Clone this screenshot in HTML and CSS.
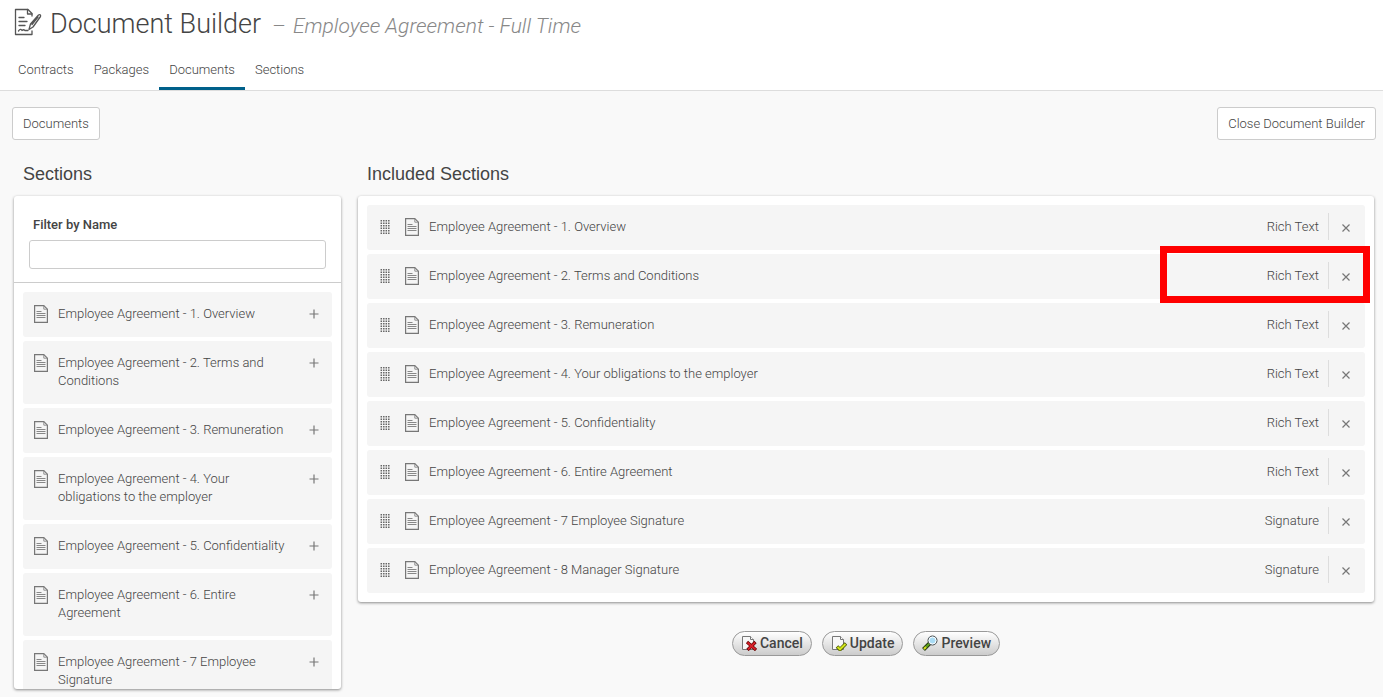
FILE: index.html
```html
<!DOCTYPE html>
<html lang="en">
<head>
<meta charset="utf-8">
<meta name="viewport" content="width=device-width, initial-scale=1">
<title>Document Builder</title>
<link rel="stylesheet" href="styles.css">
</head>
<body>
<svg class="defs" aria-hidden="true">
  <symbol id="doc" viewBox="0 0 14 18">
    <path d="M.6.6h9.2l3.6 3.6v13.2H.6z" fill="none" stroke="#777" stroke-width="1.2"/>
    <path d="M9.8.8v3.4h3.4" fill="none" stroke="#888" stroke-width=".9"/>
    <path d="M2.5 6.500h5M2.5 8.500h9M2.5 10.500h9M2.5 12.500h9" stroke="#888" stroke-width="1"/>
  </symbol>
  <symbol id="grip" viewBox="0 0 10 14">
    <path d="M1.3 0v14M3.8 0v14M6.3 0v14M8.8 0v14" stroke="#666" stroke-width="1.5" stroke-dasharray="1.5 1"/>
  </symbol>
  <symbol id="plus" viewBox="0 0 10 10"><path d="M5 .5v9M.5 5h9" stroke="#777" stroke-width="1.2"/></symbol>
  <symbol id="cross" viewBox="0 0 8 8"><path d="M.5.5l7 7M7.5.5l-7 7" stroke="#777" stroke-width="1.2"/></symbol>
  <symbol id="page" viewBox="0 0 16 16">
    <path d="M1.5 1.5h8l3 3v10h-11z" fill="#f7f7f7" stroke="#777"/>
    <path d="M9.5 1.5v3h3" fill="#fff" stroke="#777"/>
  </symbol>
</svg>

<header class="header">
  <div class="title">
    <svg class="title-icon" viewBox="0 0 28 28" fill="none" stroke="#555" stroke-width="1.3" stroke-linejoin="round" stroke-linecap="round" aria-hidden="true">
      <path d="M18 8V5.500L14 1.500H1.500v25H18v-3.500"/>
      <path d="M13.500 1.500V6H18"/>
      <path d="M5 9.500h5M5 13.500h8M5 17.500h6"/>
      <path d="M4.500 23c1.500-2 2.500-2 3.500-.5 1-1 2-1 3 0h3"/>
      <path d="M15 21.500l1.500-5.500 8-9c1.300-.8 2.500 0 2 1.500L19 19l-4 2.500zM18 16.500l6-7.500"/>
    </svg>
    <h1>Document Builder</h1>
    <span class="dash">–</span>
    <span class="subtitle">Employee Agreement - Full Time</span>
  </div>
  <nav class="tabs">
    <a href="#">Contracts</a>
    <a href="#">Packages</a>
    <a href="#" class="active" aria-current="page">Documents</a>
    <a href="#">Sections</a>
  </nav>
</header>

<main class="main">
  <div class="toolbar">
    <button class="btn">Documents</button>
    <button class="btn">Close Document Builder</button>
  </div>

  <div class="columns">
    <section class="side">
      <h2>Sections</h2>
      <div class="card side-card">
        <div class="filter">
          <label for="filter">Filter by Name</label>
          <input id="filter" type="text">
        </div>
        <ul class="list available">
          <li class="row"><svg class="doc"><use href="#doc"/></svg><span class="name">Employee Agreement - 1. Overview</span><button class="icon-btn" aria-label="Add"><svg class="plus"><use href="#plus"/></svg></button></li>
          <li class="row"><svg class="doc"><use href="#doc"/></svg><span class="name">Employee Agreement - 2. Terms and Conditions</span><button class="icon-btn" aria-label="Add"><svg class="plus"><use href="#plus"/></svg></button></li>
          <li class="row"><svg class="doc"><use href="#doc"/></svg><span class="name">Employee Agreement - 3. Remuneration</span><button class="icon-btn" aria-label="Add"><svg class="plus"><use href="#plus"/></svg></button></li>
          <li class="row"><svg class="doc"><use href="#doc"/></svg><span class="name">Employee Agreement - 4. Your obligations to the employer</span><button class="icon-btn" aria-label="Add"><svg class="plus"><use href="#plus"/></svg></button></li>
          <li class="row"><svg class="doc"><use href="#doc"/></svg><span class="name">Employee Agreement - 5. Confidentiality</span><button class="icon-btn" aria-label="Add"><svg class="plus"><use href="#plus"/></svg></button></li>
          <li class="row"><svg class="doc"><use href="#doc"/></svg><span class="name">Employee Agreement - 6. Entire Agreement</span><button class="icon-btn" aria-label="Add"><svg class="plus"><use href="#plus"/></svg></button></li>
          <li class="row"><svg class="doc"><use href="#doc"/></svg><span class="name">Employee Agreement - 7 Employee Signature</span><button class="icon-btn" aria-label="Add"><svg class="plus"><use href="#plus"/></svg></button></li>
        </ul>
      </div>
    </section>

    <section class="content">
      <h2>Included Sections</h2>
      <div class="card">
        <ul class="list included">
          <li class="row"><svg class="grip"><use href="#grip"/></svg><svg class="doc"><use href="#doc"/></svg><span class="name">Employee Agreement - 1. Overview</span><span class="type">Rich Text</span><button class="icon-btn" aria-label="Remove"><svg class="cross"><use href="#cross"/></svg></button></li>
          <li class="row"><svg class="grip"><use href="#grip"/></svg><svg class="doc"><use href="#doc"/></svg><span class="name">Employee Agreement - 2. Terms and Conditions</span><span class="type">Rich Text</span><button class="icon-btn" aria-label="Remove"><svg class="cross"><use href="#cross"/></svg></button><span class="highlight"></span></li>
          <li class="row"><svg class="grip"><use href="#grip"/></svg><svg class="doc"><use href="#doc"/></svg><span class="name">Employee Agreement - 3. Remuneration</span><span class="type">Rich Text</span><button class="icon-btn" aria-label="Remove"><svg class="cross"><use href="#cross"/></svg></button></li>
          <li class="row"><svg class="grip"><use href="#grip"/></svg><svg class="doc"><use href="#doc"/></svg><span class="name">Employee Agreement - 4. Your obligations to the employer</span><span class="type">Rich Text</span><button class="icon-btn" aria-label="Remove"><svg class="cross"><use href="#cross"/></svg></button></li>
          <li class="row"><svg class="grip"><use href="#grip"/></svg><svg class="doc"><use href="#doc"/></svg><span class="name">Employee Agreement - 5. Confidentiality</span><span class="type">Rich Text</span><button class="icon-btn" aria-label="Remove"><svg class="cross"><use href="#cross"/></svg></button></li>
          <li class="row"><svg class="grip"><use href="#grip"/></svg><svg class="doc"><use href="#doc"/></svg><span class="name">Employee Agreement - 6. Entire Agreement</span><span class="type">Rich Text</span><button class="icon-btn" aria-label="Remove"><svg class="cross"><use href="#cross"/></svg></button></li>
          <li class="row"><svg class="grip"><use href="#grip"/></svg><svg class="doc"><use href="#doc"/></svg><span class="name">Employee Agreement - 7 Employee Signature</span><span class="type">Signature</span><button class="icon-btn" aria-label="Remove"><svg class="cross"><use href="#cross"/></svg></button></li>
          <li class="row"><svg class="grip"><use href="#grip"/></svg><svg class="doc"><use href="#doc"/></svg><span class="name">Employee Agreement - 8 Manager Signature</span><span class="type">Signature</span><button class="icon-btn" aria-label="Remove"><svg class="cross"><use href="#cross"/></svg></button></li>
        </ul>
      </div>
      <div class="actions">
        <button class="pill">
          <svg viewBox="0 0 16 16" aria-hidden="true"><use href="#page"/><path d="M6 7l9 8M14.500 7L6.500 15" stroke="#600" stroke-width="3.200"/><path d="M6.500 7.500l8 7M14 7.500l-7 7" stroke="#d8202a" stroke-width="1.800"/></svg>
          Cancel
        </button>
        <button class="pill">
          <svg viewBox="0 0 16 16" aria-hidden="true"><use href="#page"/><path d="M6 11.500l3 3 6-6" fill="none" stroke="#4b5a00" stroke-width="3.600"/><path d="M6.500 12l2.500 2.300L14.500 9" fill="none" stroke="#d3e51c" stroke-width="2"/></svg>
          Update
        </button>
        <button class="pill">
          <svg viewBox="0 0 16 16" aria-hidden="true"><path d="M1.500 14.500l6-6" stroke="#233a10" stroke-width="4"/><path d="M2 14l5.500-5.500" stroke="#5fa51e" stroke-width="2"/><path d="M2 14l2-2" stroke="#d8d820" stroke-width="2"/><circle cx="10.500" cy="5.500" r="4.500" fill="#a9dcf5" stroke="#444"/><circle cx="10.500" cy="5.500" r="3.500" fill="none" stroke="#fff"/></svg>
          Preview
        </button>
      </div>
    </section>
  </div>
</main>
</body>
</html>
```

FILE: styles.css
```css
* { box-sizing: border-box; }

body {
  margin: 0;
  height: 100vh;
  display: flex;
  flex-direction: column;
  background: #f9f9f9;
  color: #444;
  font: 300 13px/18px Roboto, sans-serif;
}

button, input { font: inherit; color: inherit; }
button { cursor: pointer; }
h1, h2, ul { margin: 0; padding: 0; font-weight: inherit; }
svg { flex: none; display: block; }
.defs { position: absolute; width: 0; height: 0; }

.header {
  background: #fff;
  border-bottom: 1px solid #ddd;
}
.title {
  display: flex;
  align-items: baseline;
  padding: 8px 14px 0;
  height: 50px;
}
.title-icon { width: 28px; height: 28px; align-self: flex-start; margin-right: 8px; }
.title h1 { font-size: 27px; line-height: 32px; }
.dash { margin: 0 7px 0 11px; font-size: 21px; color: #888; }
.subtitle { font-size: 21px; font-style: italic; color: #888; }

.tabs { display: flex; padding: 0 8px; }
.tabs a {
  padding: 11px 10px 8px;
  border-bottom: 3px solid transparent;
  color: inherit;
  text-decoration: none;
}
.tabs .active { border-color: #00608a; }

.main {
  flex: 1;
  min-height: 0;
  display: flex;
  flex-direction: column;
  padding: 16px 7px 8px 12px;
}
.toolbar { display: flex; justify-content: space-between; }
.btn {
  height: 33px;
  padding: 0 10px;
  background: #fff;
  border: 1px solid #ccc;
  border-radius: 3px;
}

.columns {
  flex: 1;
  min-height: 0;
  display: flex;
  gap: 17px;
  padding: 0 2px;
}
.side { width: 327px; display: flex; flex-direction: column; }
.content { flex: 1; }
h2 {
  padding: 22px 9px 10px;
  font: 400 18px/24px "Liberation Sans", Arial, sans-serif;
}
.card {
  background: #fff;
  border-radius: 3px;
  box-shadow: 0 1px 3px rgba(0, 0, 0, .45);
}
.side-card {
  flex: 1;
  min-height: 0;
  display: flex;
  flex-direction: column;
  overflow: hidden;
}
.filter { padding: 20px 15px 13px; border-bottom: 1px solid #ccc; }
.filter label { display: block; padding: 0 4px 6px; font-weight: 500; }
.filter input {
  display: block;
  width: 100%;
  height: 29px;
  padding: 0 8px;
  background: #fff;
  border: 1px solid #ccc;
  border-radius: 3px;
}

.list { display: grid; gap: 4px; padding: 9px; list-style: none; }
.available { overflow: hidden; flex: 1; min-height: 0; align-content: start; }
.row {
  position: relative;
  display: flex;
  align-items: flex-start;
  padding: 13px 12px 14px 11px;
  background: #f5f5f5;
  border-radius: 3px;
}
.included .row { padding-left: 13px; }
.name { flex: 1; padding: 0 18px 0 10px; }
.doc { width: 14px; height: 18px; }
.grip { width: 10px; height: 14px; margin: 2px 15px 0 0; }
.icon-btn { display: flex; padding: 4px 1px; background: none; border: 0; }
.plus, .cross { width: 10px; height: 10px; }
.included .icon-btn {
  height: 27px;
  margin: -5px 0 -4px 9px;
  padding: 11px 3px 0 13px;
  border-left: 1px solid #ddd;
}
.cross { width: 8px; height: 8px; }
.highlight {
  position: absolute;
  top: -8px;
  right: -5px;
  width: 210px;
  height: 57px;
  border: 7px solid #f00;
  pointer-events: none;
}

.actions { display: flex; justify-content: center; gap: 10px; padding-top: 29px; }
.pill {
  display: flex;
  align-items: center;
  gap: 3px;
  height: 25px;
  padding: 0 8px 1px;
  background: linear-gradient(#fff, #ccc);
  border: 1px solid #999;
  border-radius: 13px;
  font-size: 14px;
  font-weight: 500;
}
.pill svg { width: 16px; height: 16px; }
```
